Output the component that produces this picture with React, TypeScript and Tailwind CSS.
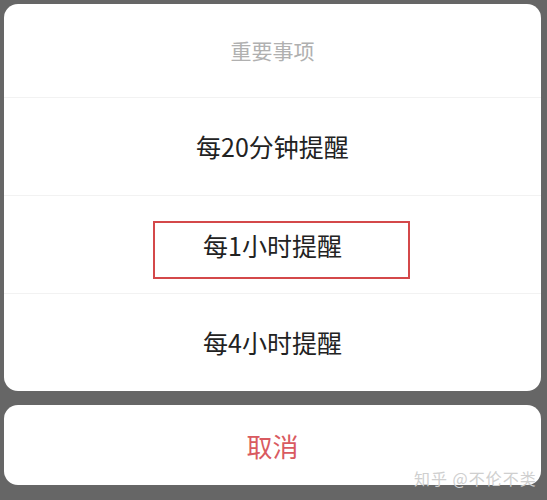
const rows = ["每20分钟提醒", "每1小时提醒", "每4小时提醒"];

const App = () => {
  return (
    <div className="relative w-[547px] h-[500px] bg-[#666666] pt-[4px] pl-[4px] pr-[6px] flex flex-col font-['Noto_Sans_CJK_SC','Noto_Sans',sans-serif]">
      <div className="h-[387px] bg-white rounded-[14px] flex flex-col overflow-hidden">
        <div className="h-[93px] flex items-center justify-center text-[21px] text-[#b0b0b0]">
          重要事项
        </div>
        {rows.map((label, i) =>
          i === 1 ? (
            <div
              key={label}
              className="h-[98px] border-t border-[#f2f2f2] flex items-center justify-center"
            >
              <div className="w-[257px] h-[58px] mt-[10px] ml-[18px] border-2 border-[#d4484a] flex items-center justify-center pb-[8px] pr-[18px] text-[25px] text-[#222222]">
                {label}
              </div>
            </div>
          ) : (
            <div
              key={label}
              className="h-[98px] border-t border-[#f2f2f2] flex items-center justify-center text-[25px] text-[#222222]"
            >
              {label}
            </div>
          )
        )}
      </div>
      <div className="mt-[14px] h-[80px] bg-white rounded-[14px] flex items-center justify-center text-[26px] text-[#d95a60]">
        取消
      </div>
      <div className="absolute left-[414px] top-[466px] text-[16px] text-[#cfcfcf] tracking-[1px]">
        知乎 @不伦不类
      </div>
    </div>
  );
};

export default App;
